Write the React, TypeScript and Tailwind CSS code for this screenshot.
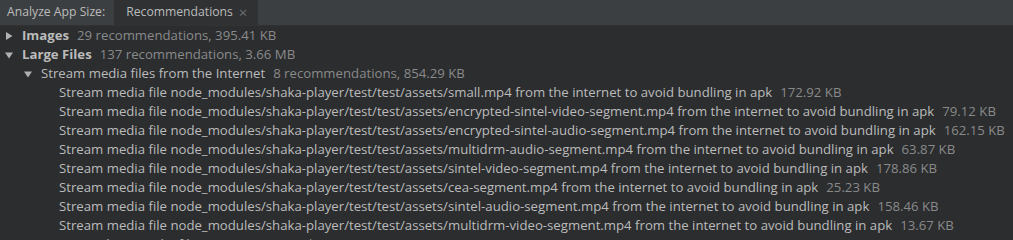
const files: [string, string][] = [
  ['small.mp4', '172.92 KB'],
  ['encrypted-sintel-video-segment.mp4', '79.12 KB'],
  ['encrypted-sintel-audio-segment.mp4', '162.15 KB'],
  ['multidrm-audio-segment.mp4', '63.87 KB'],
  ['sintel-video-segment.mp4', '178.86 KB'],
  ['cea-segment.mp4', '25.23 KB'],
  ['sintel-audio-segment.mp4', '158.46 KB'],
  ['multidrm-video-segment.mp4', '13.67 KB'],
];

function Arrow({ open }: { open: boolean }) {
  return (
    <svg width="10" height="10" viewBox="0 0 10 10" className="shrink-0">
      {open ? <path d="M1 2.5h8L5 8.5z" fill="#aeb2b5" /> : <path d="M2 1v8l6.5-4z" fill="#aeb2b5" />}
    </svg>
  );
}

function Row({ indent, open, children }: { indent: string; open?: boolean; children: React.ReactNode }) {
  return (
    <div className={`flex items-center h-[19px] whitespace-nowrap ${indent}`}>
      {open !== undefined && <span className="w-[18px] flex justify-start"><Arrow open={open} /></span>}
      {children}
    </div>
  );
}

export default function App() {
  return (
    <div className="w-[1013px] h-[240px] overflow-hidden bg-[#2b2d2f] text-[13.2px] leading-none text-[#bbbbbb]" style={{ fontFamily: '"Open Sans", sans-serif' }}>
      <div className="flex h-[26px] bg-[#3c3f41] border-b border-[#323232] text-[12.2px]">
        <div className="flex items-center pl-[7px] pr-[9px] text-[#bbbbbb]">Analyze App Size:</div>
        <div className="flex items-center gap-[6px] pl-[12px] pr-[11px] bg-[#2f3133] text-[#bbbbbb]">
          Recommendations
          <span className="text-[#6e6e6e] text-[15px] leading-none">×</span>
        </div>
      </div>
      <div className="pt-[0px]">
        <Row indent="pl-[4px]" open={false}>
          <span className="font-bold">Images</span>
          <span className="ml-[8px] text-[#8a8a8a]">29 recommendations, 395.41 KB</span>
        </Row>
        <Row indent="pl-[4px]" open>
          <span className="font-bold">Large Files</span>
          <span className="ml-[8px] text-[#8a8a8a]">137 recommendations, 3.66 MB</span>
        </Row>
        <Row indent="pl-[23px]" open>
          <span>Stream media files from the Internet</span>
          <span className="ml-[8px] text-[#8a8a8a]">8 recommendations, 854.29 KB</span>
        </Row>
        {files.map(([f, s]) => (
          <Row key={f} indent="pl-[59px]">
            <span>Stream media file node_modules/shaka-player/test/test/assets/{f} from the internet to avoid bundling in apk</span>
            <span className="ml-[8px] text-[#8a8a8a]">{s}</span>
          </Row>
        ))}
        <Row indent="pl-[23px]" open>
          <span>Compress large audio files</span>
          <span className="ml-[8px] text-[#8a8a8a]">100 recommendations, 700.41 KB</span>
        </Row>
      </div>
    </div>
  );
}
